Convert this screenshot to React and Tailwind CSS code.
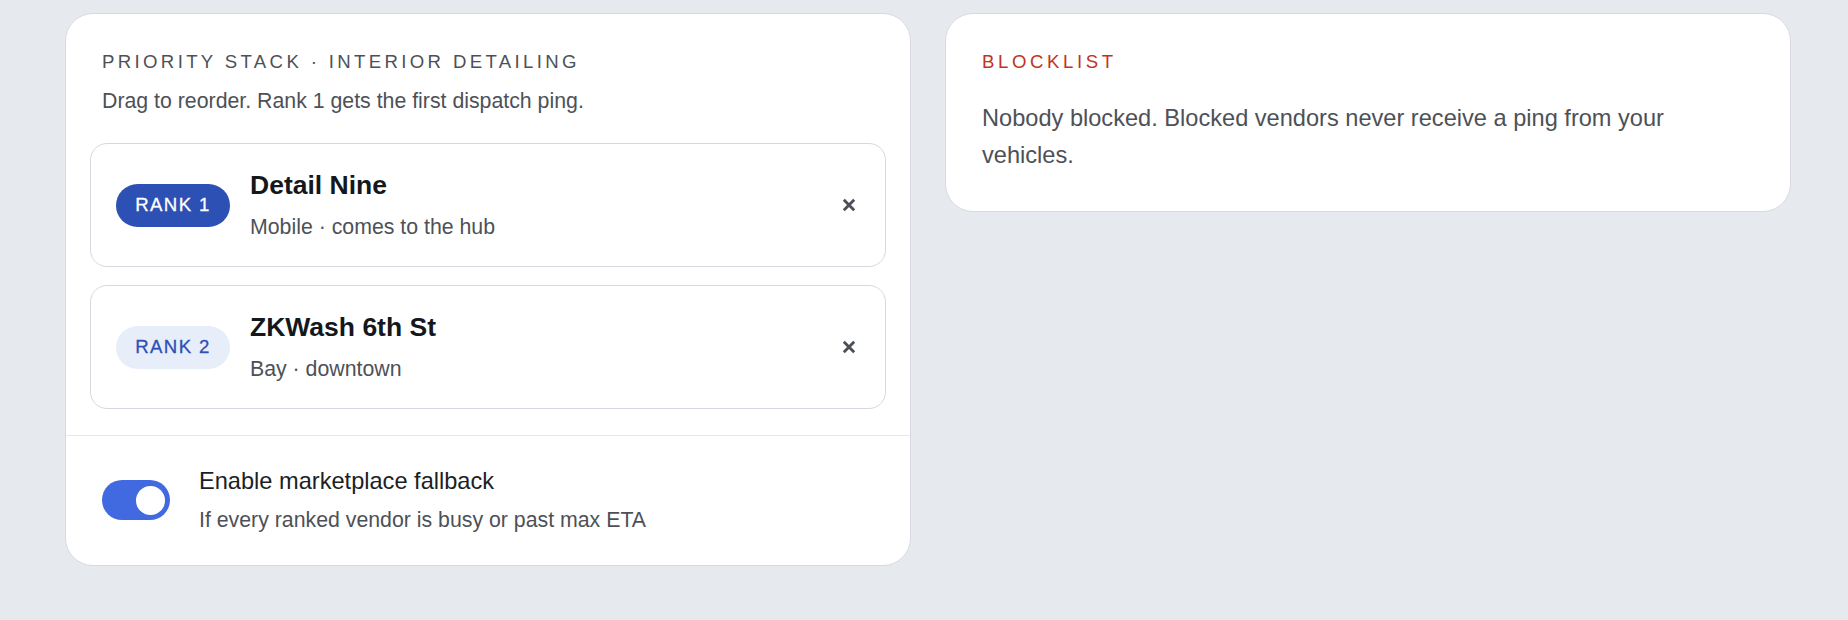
import React from "react";

function CloseIcon() {
  return (
    <svg width="14" height="14" viewBox="0 0 14 14" aria-hidden="true">
      <path d="M1.8 1.8 L12.2 12.2 M12.2 1.8 L1.8 12.2" stroke="#4a4e55" strokeWidth="2.8" strokeLinecap="butt" fill="none" />
    </svg>
  );
}

function VendorRow({ rank, name, meta, primary }) {
  return (
    <li className="flex items-center rounded-[17px] border border-[#d5d9df] bg-white py-[24.5px] pl-[25px] pr-[22px]">
      <span
        className={
          primary
            ? "flex h-[43px] w-[114px] shrink-0 items-center justify-center rounded-full bg-[#2c50b4] text-[18.6px] tracking-[1.4px] text-white [-webkit-text-stroke:0.3px_white]"
            : "flex h-[43px] w-[114px] shrink-0 items-center justify-center rounded-full bg-[#e8edfa] text-[18.6px] tracking-[1.4px] text-[#2c50b4] [-webkit-text-stroke:0.3px_#2c50b4]"
        }
      >
        {rank}
      </span>
      <div className="ml-[20px] flex min-w-0 flex-1 flex-col">
        <div className="text-[26.5px] font-bold leading-[32px] text-[#14171c]">{name}</div>
        <div className="mt-[11px] text-[21.3px] leading-[30px] text-[#4d5157]">{meta}</div>
      </div>
      <button type="button" className="flex h-[29px] w-[29px] items-center justify-center">
        <CloseIcon />
      </button>
    </li>
  );
}

export default function App() {
  return (
    <div className="min-h-screen w-full bg-[#e6e9ee] font-['Liberation_Sans',Arial,sans-serif]">
      <div className="flex items-start gap-[34px] pl-[65px] pt-[13px]">
        <section className="w-[846px] rounded-[28px] border border-[#d6dae0] bg-white">
          <div className="px-[36px] pt-[35px]">
            <h2 className="text-[18.6px] leading-[26px] tracking-[3.35px] text-[#4d5157]">
              PRIORITY STACK · INTERIOR DETAILING
            </h2>
            <p className="mt-[11px] text-[21.3px] leading-[30px] text-[#4d5157]">
              Drag to reorder. Rank 1 gets the first dispatch ping.
            </p>
          </div>
          <ul className="mt-[27px] flex flex-col gap-[18px] px-[24px] pb-[26px]">
            <VendorRow rank="RANK 1" name="Detail Nine" meta="Mobile · comes to the hub" primary />
            <VendorRow rank="RANK 2" name="ZKWash 6th St" meta="Bay · downtown" />
          </ul>
          <div className="flex items-center gap-[29px] border-t border-[#e6e8ec] px-[36px] py-[30px]">
            <button
              type="button"
              role="switch"
              aria-checked="true"
              className="flex h-[40px] w-[68px] shrink-0 items-center justify-end rounded-full bg-[#416ae0] pr-[5px]"
            >
              <span className="h-[29px] w-[29px] rounded-full bg-white" />
            </button>
            <div className="flex flex-col">
              <div className="text-[23.6px] leading-[30px] text-[#1c1f24]">Enable marketplace fallback</div>
              <div className="mt-[8.5px] text-[21.3px] leading-[30px] text-[#4d5157]">
                If every ranked vendor is busy or past max ETA
              </div>
            </div>
          </div>
        </section>

        <section className="w-[846px] rounded-[28px] border border-[#d6dae0] bg-white px-[36px] pb-[38px] pt-[35px]">
          <h2 className="text-[18.6px] leading-[26px] tracking-[3.6px] text-[#c2331f]">BLOCKLIST</h2>
          <p className="mt-[25px] text-[23.6px] leading-[36.7px] text-[#4d5157]">
            Nobody blocked. Blocked vendors never receive a ping from your vehicles.
          </p>
        </section>
      </div>
    </div>
  );
}
